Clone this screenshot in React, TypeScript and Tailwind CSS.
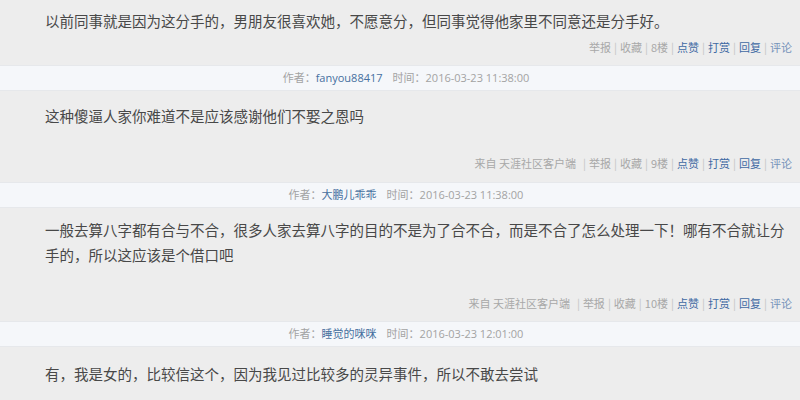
import React from "react";

type Post = {
  text: string;
  floor: string;
  client?: boolean;
  pad: string;
  gap: string;
  bottom: string;
};

type Meta = { author: string; time: string };

const font = { fontFamily: '"Noto Sans CJK SC", "Open Sans", sans-serif' };
const metaFont = { fontFamily: '"Open Sans", "Noto Sans CJK SC", sans-serif' };

function Actions({ floor, client }: { floor: string; client?: boolean }) {
  const gray = ["举报", "收藏", floor];
  const blue = ["点赞", "打赏", "回复", "评论"];
  return (
    <div className="flex justify-end pr-[8px] text-[11px] leading-[16px] text-[#a8a8a8]">
      {client && <span className="mr-[4px]">来自 天涯社区客户端</span>}
      {client && <span className="mx-[3px] text-[#c4c4c4]">|</span>}
      {gray.map((g, i) => (
        <React.Fragment key={g}>
          {i > 0 && <span className="mx-[3px] text-[#c4c4c4]">|</span>}
          <span>{g}</span>
        </React.Fragment>
      ))}
      {blue.map((b) => (
        <React.Fragment key={b}>
          <span className="mx-[3px] text-[#c4c4c4]">|</span>
          <span className={b === "评论" ? "text-[#7593ba]" : "text-[#4069a3]"}>{b}</span>
        </React.Fragment>
      ))}
    </div>
  );
}

function Header({ author, time }: Meta) {
  return (
    <div
      className="flex h-[26px] items-center justify-center border-y border-[#e6e8eb] bg-[#f5f7fa] pl-[12px] text-[11px] text-[#a3a3a3]"
      style={metaFont}
    >
      <span>作者：</span>
      <span className="text-[#46709f]">{author}</span>
      <span className="ml-[10px]">时间：{time}</span>
    </div>
  );
}

function Body({ p }: { p: Post }) {
  return (
    <div className={`bg-[#ededed] ${p.pad} ${p.bottom}`}>
      <p className="pl-[45px] pr-[10px] text-[14.5px] leading-[25px] text-[#484848]">{p.text}</p>
      <div className={p.gap}>
        <Actions floor={p.floor} client={p.client} />
      </div>
    </div>
  );
}

export default function App() {
  return (
    <div className="h-[400px] w-[800px] overflow-hidden bg-[#ededed]" style={font}>
      <Body
        p={{
          text: "以前同事就是因为这分手的，男朋友很喜欢她，不愿意分，但同事觉得他家里不同意还是分手好。",
          floor: "8楼",
          pad: "pt-[8px]",
          gap: "mt-[6px]",
          bottom: "pb-[10px]",
        }}
      />
      <Header author="fanyou88417" time="2016-03-23 11:38:00" />
      <Body
        p={{
          text: "这种傻逼人家你难道不是应该感谢他们不娶之恩吗",
          floor: "9楼",
          client: true,
          pad: "pt-[12px]",
          gap: "mt-[27px]",
          bottom: "pb-[11px]",
        }}
      />
      <Header author="大鹏儿乖乖" time="2016-03-23 11:38:00" />
      <Body
        p={{
          text: "一般去算八字都有合与不合，很多人家去算八字的目的不是为了合不合，而是不合了怎么处理一下！哪有不合就让分手的，所以这应该是个借口吧",
          floor: "10楼",
          client: true,
          pad: "pt-[9px]",
          gap: "mt-[28px]",
          bottom: "pb-[10px]",
        }}
      />
      <Header author="睡觉的咪咪" time="2016-03-23 12:01:00" />
      <div className="bg-[#ededed] pt-[14px]">
        <p className="pl-[45px] pr-[10px] text-[14.5px] leading-[25px] text-[#484848]">
          有，我是女的，比较信这个，因为我见过比较多的灵异事件，所以不敢去尝试
        </p>
      </div>
    </div>
  );
}
